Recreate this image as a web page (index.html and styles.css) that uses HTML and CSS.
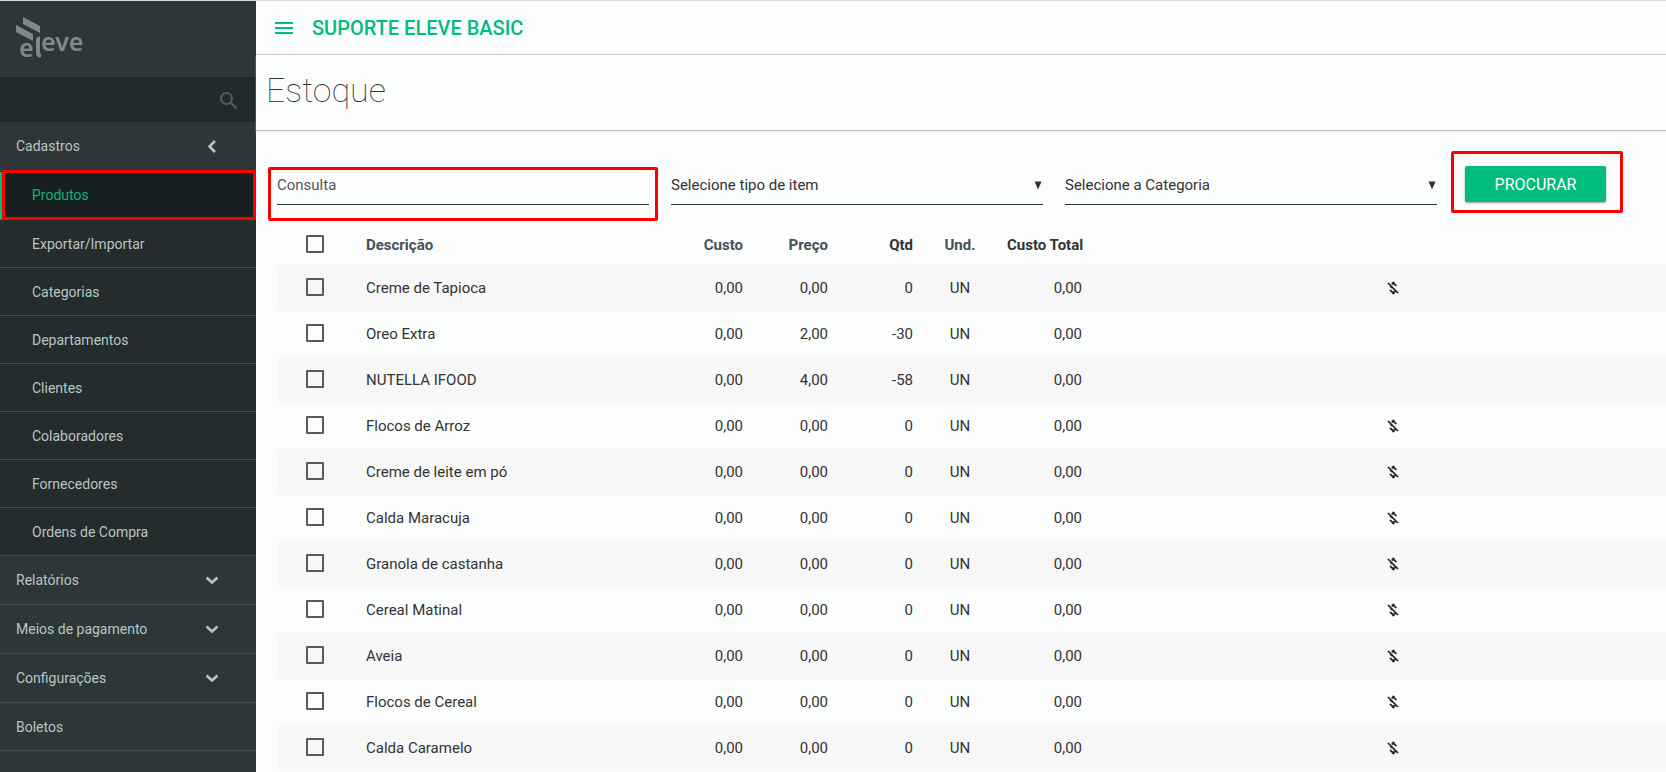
FILE: index.html
```html
<!DOCTYPE html>
<html lang="pt-BR">
<head>
<meta charset="utf-8">
<title>Estoque</title>
<link rel="stylesheet" href="styles.css">
</head>
<body>
<svg class="sprite" aria-hidden="true">
  <symbol id="down" viewBox="0 0 24 24"><path d="M6.500 9.500l5.500 5 5.500-5" fill="none" stroke="currentColor" stroke-width="2.600"/></symbol>
  <symbol id="left" viewBox="0 0 24 24"><path d="M15 7l-5.500 5.500 5.500 5.500" fill="none" stroke="currentColor" stroke-width="2.600"/></symbol>
  <symbol id="tri" viewBox="0 0 8 9"><path d="M0.500 0.500h7L4 8.500z" fill="currentColor"/></symbol>
  <symbol id="money-off" viewBox="0 0 24 24"><path fill="currentColor" stroke="currentColor" stroke-width="0.800" d="M12.5 6.9c1.78 0 2.44.85 2.5 2.1h2.21c-.07-1.72-1.12-3.3-3.21-3.81V3h-3v2.16c-.53.12-1.03.3-1.48.54l1.47 1.47c.41-.17.91-.27 1.51-.27zM5.33 4.06L4.06 5.33 7.5 8.77c0 2.08 1.56 3.21 3.91 3.91l3.51 3.51c-.34.48-1.05.91-2.42.91-2.06 0-2.87-.92-2.98-2.1h-2.2c.12 2.19 1.76 3.42 3.68 3.83V21h3v-2.15c.96-.18 1.82-.55 2.45-1.12l2.22 2.22 1.27-1.27L5.33 4.06z"/></symbol>
</svg>
<div class="app">
  <aside class="sidebar">
    <a class="brand" href="#" aria-label="eleve">
      <svg class="logo" width="76" height="56" viewBox="0 0 76 56">
        <path d="M7 0l17 9v7L7 7zM0 8l17 9v7L0 15z"/>
        <text x="3" y="40">e</text>
        <path d="M20 21l4-2v16q0 2 1 2.500v3q-5 0-5-5z"/>
        <text x="25" y="34">eve</text>
      </svg>
    </a>
    <form class="search">
      <input class="search-input" type="search" aria-label="Buscar no menu">
      <svg class="icon search-icon" viewBox="0 0 24 24"><path fill="currentColor" d="M15.500 14h-.79l-.28-.27A6.471 6.471 0 0 0 16 9.500 6.500 6.500 0 1 0 9.500 16c1.610 0 3.090-.59 4.230-1.570l.27.28v.79l5 4.990L20.490 19l-4.990-5zm-6 0C7.010 14 5 11.990 5 9.500S7.010 5 9.500 5 14 7.010 14 9.500 11.990 14 9.500 14z"/></svg>
    </form>
    <nav>
      <a class="item" href="#">Cadastros<svg class="icon"><use href="#left"/></svg></a>
      <div class="submenu">
        <a class="subitem active" href="#">Produtos<span class="mark mark-nav"></span></a>
        <a class="subitem" href="#">Exportar/Importar</a>
        <a class="subitem" href="#">Categorias</a>
        <a class="subitem" href="#">Departamentos</a>
        <a class="subitem" href="#">Clientes</a>
        <a class="subitem" href="#">Colaboradores</a>
        <a class="subitem" href="#">Fornecedores</a>
        <a class="subitem" href="#">Ordens de Compra</a>
      </div>
      <a class="item" href="#">Relatórios<svg class="icon"><use href="#down"/></svg></a>
      <a class="item" href="#">Meios de pagamento<svg class="icon"><use href="#down"/></svg></a>
      <a class="item" href="#">Configurações<svg class="icon"><use href="#down"/></svg></a>
      <a class="item item-plain" href="#">Boletos</a>
    </nav>
  </aside>
  <main class="main">
    <header class="topbar">
      <button class="menu-btn" type="button" aria-label="Menu"><svg class="icon" viewBox="0 0 24 24"><path fill="currentColor" d="M3 18h18v-2H3v2zm0-5h18v-2H3v2zm0-7v2h18V6H3z"/></svg></button>
      <span class="company">SUPORTE ELEVE BASIC</span>
    </header>
    <div class="heading"><h1>Estoque</h1></div>
    <form class="filters">
      <div class="field"><input class="control" type="text" placeholder="Consulta" aria-label="Consulta"><span class="mark mark-field"></span></div>
      <div class="field"><select class="control" aria-label="Tipo de item"><option>Selecione tipo de item</option></select><svg class="arrow"><use href="#tri"/></svg></div>
      <div class="field"><select class="control" aria-label="Categoria"><option>Selecione a Categoria</option></select><svg class="arrow"><use href="#tri"/></svg></div>
      <div class="action"><button class="submit" type="button">PROCURAR</button><span class="mark mark-button"></span></div>
    </form>
    <table class="stock">
      <colgroup><col class="c-check"><col class="c-desc"><col class="c-num"><col class="c-num"><col class="c-num"><col class="c-unit"><col class="c-num"><col class="c-icon"><col></colgroup>
      <thead>
        <tr><th><input class="check" type="checkbox" aria-label="Selecionar todos"></th><th class="text soft">Descrição</th><th class="soft">Custo</th><th class="soft">Preço</th><th>Qtd</th><th class="mid soft">Und.</th><th>Custo Total</th><th></th><th></th></tr>
      </thead>
      <tbody>
        <tr><td><input class="check" type="checkbox" aria-label="Creme de Tapioca"></td><td class="text">Creme de Tapioca</td><td>0,00</td><td>0,00</td><td>0</td><td class="mid">UN</td><td>0,00</td><td><svg class="money"><use href="#money-off"/></svg></td><td></td></tr>
        <tr><td><input class="check" type="checkbox" aria-label="Oreo Extra"></td><td class="text">Oreo Extra</td><td>0,00</td><td>2,00</td><td>-30</td><td class="mid">UN</td><td>0,00</td><td></td><td></td></tr>
        <tr><td><input class="check" type="checkbox" aria-label="NUTELLA IFOOD"></td><td class="text">NUTELLA IFOOD</td><td>0,00</td><td>4,00</td><td>-58</td><td class="mid">UN</td><td>0,00</td><td></td><td></td></tr>
        <tr><td><input class="check" type="checkbox" aria-label="Flocos de Arroz"></td><td class="text">Flocos de Arroz</td><td>0,00</td><td>0,00</td><td>0</td><td class="mid">UN</td><td>0,00</td><td><svg class="money"><use href="#money-off"/></svg></td><td></td></tr>
        <tr><td><input class="check" type="checkbox" aria-label="Creme de leite em pó"></td><td class="text">Creme de leite em pó</td><td>0,00</td><td>0,00</td><td>0</td><td class="mid">UN</td><td>0,00</td><td><svg class="money"><use href="#money-off"/></svg></td><td></td></tr>
        <tr><td><input class="check" type="checkbox" aria-label="Calda Maracuja"></td><td class="text">Calda Maracuja</td><td>0,00</td><td>0,00</td><td>0</td><td class="mid">UN</td><td>0,00</td><td><svg class="money"><use href="#money-off"/></svg></td><td></td></tr>
        <tr><td><input class="check" type="checkbox" aria-label="Granola de castanha"></td><td class="text">Granola de castanha</td><td>0,00</td><td>0,00</td><td>0</td><td class="mid">UN</td><td>0,00</td><td><svg class="money"><use href="#money-off"/></svg></td><td></td></tr>
        <tr><td><input class="check" type="checkbox" aria-label="Cereal Matinal"></td><td class="text">Cereal Matinal</td><td>0,00</td><td>0,00</td><td>0</td><td class="mid">UN</td><td>0,00</td><td><svg class="money"><use href="#money-off"/></svg></td><td></td></tr>
        <tr><td><input class="check" type="checkbox" aria-label="Aveia"></td><td class="text">Aveia</td><td>0,00</td><td>0,00</td><td>0</td><td class="mid">UN</td><td>0,00</td><td><svg class="money"><use href="#money-off"/></svg></td><td></td></tr>
        <tr><td><input class="check" type="checkbox" aria-label="Flocos de Cereal"></td><td class="text">Flocos de Cereal</td><td>0,00</td><td>0,00</td><td>0</td><td class="mid">UN</td><td>0,00</td><td><svg class="money"><use href="#money-off"/></svg></td><td></td></tr>
        <tr><td><input class="check" type="checkbox" aria-label="Calda Caramelo"></td><td class="text">Calda Caramelo</td><td>0,00</td><td>0,00</td><td>0</td><td class="mid">UN</td><td>0,00</td><td><svg class="money"><use href="#money-off"/></svg></td><td></td></tr>
      </tbody>
    </table>
  </main>
</div>
</body>
</html>
```
FILE: styles.css
```css
* {
  box-sizing: border-box;
}

body {
  margin: 0;
  background: #fbfdfc;
  color: #333;
  font-family: Roboto, "Liberation Sans", sans-serif;
  font-size: 15px;
}

.sprite {
  display: none;
}

.app {
  display: flex;
  min-height: 100vh;
  border-top: 1px solid #d9dcdf;
}

.icon {
  display: block;
  flex: none;
  width: 24px;
  height: 24px;
}

/* Red highlight frames */
.mark {
  position: absolute;
  border: 3px solid #f00;
  border-radius: 2px;
  pointer-events: none;
}

.mark-nav {
  inset: -2px 0 -1px;
}

.mark-field {
  inset: 1px -9px -16px;
}

.mark-button {
  inset: -15px -17px -11px -14px;
}

/* Sidebar */
.sidebar {
  flex: none;
  width: 256px;
  background: #2d3738;
}

.brand {
  display: block;
  height: 76px;
  padding: 16px 16px 0;
}

.logo {
  display: block;
  fill: #81888a;
  font: 600 25px "Noto Sans", sans-serif;
}

.search {
  display: flex;
  align-items: center;
  height: 45px;
  padding: 2px 15px 0;
  background: #222a2b;
}

.search-input {
  flex: 1;
  min-width: 0;
  border: 0;
  background: none;
  color: #b7c5c4;
  outline: 0;
}

.search-icon {
  color: #4c5f66;
}

.item,
.subitem {
  display: flex;
  align-items: center;
  border-bottom: 1px solid #484a4c;
  color: #b7c6c4;
  font-size: 14px;
  font-weight: 400;
  text-decoration: none;
}

.item {
  justify-content: space-between;
  height: 49px;
  padding: 0 32px 0 16px;
}

.item-plain {
  height: 48px;
}

.submenu {
  padding-top: 1px;
  background: #242c2e;
}

.subitem {
  position: relative;
  height: 48px;
  padding-left: 32px;
}

.active {
  border-left: 2px solid #00bc7e;
  padding: 0 0 2px 30px;
  background: #181f20;
  color: #0db47a;
}

/* Main area */
.main {
  flex: 1;
  min-width: 0;
}

.topbar {
  display: flex;
  align-items: center;
  gap: 16px;
  height: 54px;
  padding: 0 16px;
  border-bottom: 1px solid #ccc;
  color: #00bc7e;
}

.menu-btn {
  padding: 0;
  border: 0;
  background: none;
  color: inherit;
}

.company {
  font-size: 20px;
  font-weight: 500;
}

.heading {
  height: 76px;
  padding: 12px 10px;
  border-bottom: 1px solid #c4c6c6;
  box-shadow: 0 1px 1px #eceeed;
}

h1 {
  margin: 0;
  font-size: 34px;
  font-weight: 100;
  line-height: 46px;
}

.filters {
  display: grid;
  grid-template-columns: repeat(3, 1fr) 207px;
  gap: 22px;
  padding: 35px 0 20px 21px;
}

.field,
.action {
  position: relative;
}

.control {
  display: block;
  width: 100%;
  height: 39px;
  padding: 0;
  border: 0;
  border-bottom: 1px solid #2b373b;
  border-radius: 0;
  appearance: none;
  background: none;
  color: #333;
  font: inherit;
  outline: 0;
}

.control::placeholder {
  color: #555;
  opacity: 1;
}

.arrow {
  position: absolute;
  top: 15px;
  right: 1px;
  width: 8px;
  height: 9px;
  pointer-events: none;
}

.action {
  align-self: start;
  justify-self: start;
  margin-left: 6px;
}

.submit {
  display: block;
  width: 141px;
  height: 36px;
  border: 0;
  border-radius: 2px;
  background: #00bc7e;
  box-shadow: 0 1px 2px #999;
  color: #fff;
  font: 400 16px Roboto, sans-serif;
}

/* Stock table */
.stock {
  width: calc(100% - 21px);
  margin-left: 21px;
  border-collapse: collapse;
  table-layout: fixed;
}

.c-check {
  width: 84px;
}

.c-desc {
  width: 302px;
}

.c-num {
  width: 85px;
}

.c-unit {
  width: 84px;
}

.c-icon {
  width: 319px;
}

th,
td {
  height: 46px;
  padding: 0 5px;
  text-align: right;
  white-space: nowrap;
}

th {
  height: 40px;
  font-weight: 700;
}

.soft {
  color: #455058;
}

.text {
  text-align: left;
}

.mid {
  text-align: center;
}

tbody tr:nth-child(odd) {
  background: #f7f7f7;
}

.check {
  display: block;
  width: 18px;
  height: 18px;
  margin: 0 0 2px 24px;
  border: 2px solid #5a5a5a;
  border-radius: 1px;
  appearance: none;
}

.money {
  display: block;
  width: 16px;
  height: 16px;
  margin-left: auto;
  color: #222;
}
```
